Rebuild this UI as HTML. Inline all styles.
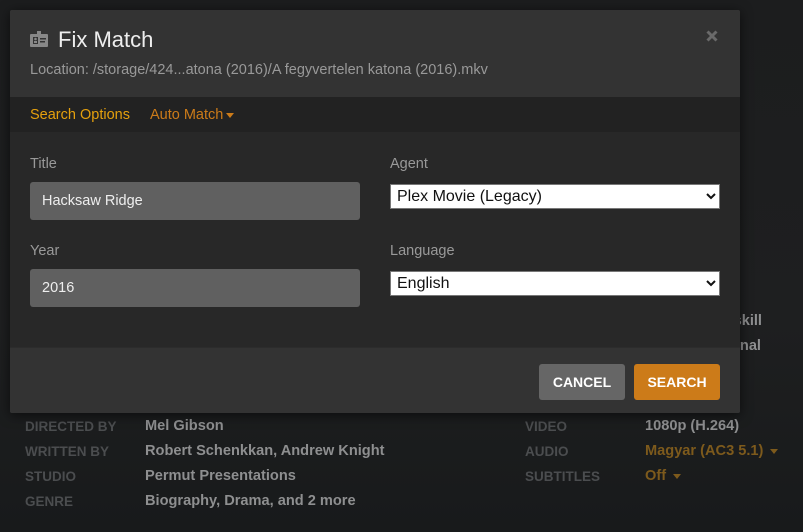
<!DOCTYPE html>
<html><head><meta charset="utf-8">
<style>
*{box-sizing:border-box;margin:0;padding:0}
html,body{width:803px;height:532px;overflow:hidden}
body{background:linear-gradient(180deg,#1c1d1e 0%,#1e1f20 60%,#181a1b 100%);font-family:"Liberation Sans",sans-serif;position:relative}
.bg{position:absolute;font-weight:bold;font-size:14.6px}
.lbl{color:#4b4d4f;font-size:13.5px}
.val{color:#8e8f90}
.or{color:#7d5a1c}
.car{display:inline-block;width:0;height:0;border-left:4px solid transparent;border-right:4px solid transparent;border-top:5px solid currentColor;vertical-align:middle;margin-left:3px}
.modal{position:absolute;left:10px;top:10px;width:730px;height:403px;background:#282828;box-shadow:0 2px 12px rgba(0,0,0,.6);border-radius:2px;overflow:hidden}
.hdr{height:87px;background:#333;position:relative}
.hdr h1{position:absolute;left:48px;top:17px;font-weight:normal;font-size:22px;color:#eee}
.hdr .loc{position:absolute;left:20px;top:52px;font-size:14.5px;color:#999}
.close{position:absolute;right:22px;top:20px;width:12px;height:12px}
.bar{height:35px;background:#222;position:relative;font-size:14.5px}
.bar span.t{position:absolute;top:10px}
.body{position:relative;height:215px}
.f{position:absolute;font-size:14.5px;color:#999}
.inp{position:absolute;width:330px;height:38px;background:#606060;border-radius:3px;color:#eee;font-size:14.5px;padding:11px 12px}
select{position:absolute;width:330px;height:25px;background:#fff;border:1px solid #777;font-size:16px;font-family:"Liberation Sans",sans-serif;color:#111;padding-left:2px}
.ftr{position:absolute;left:0;top:337px;width:730px;height:66px;background:#333;border-top:1px solid #2c2c2c}
.btn{position:absolute;top:16px;width:86px;height:36px;border-radius:3px;color:#fff;font-weight:bold;font-size:14px;text-align:center;line-height:36px}
</style></head><body>
<div class="bg val" style="right:41px;top:313px">skill</div>
<div class="bg val" style="right:42px;top:338px">sonal</div>
<div class="bg lbl" style="left:25px;top:419px">DIRECTED BY</div>
<div class="bg lbl" style="left:25px;top:444px">WRITTEN BY</div>
<div class="bg lbl" style="left:25px;top:469px">STUDIO</div>
<div class="bg lbl" style="left:25px;top:494px">GENRE</div>
<div class="bg val" style="left:145px;top:418px">Mel Gibson</div>
<div class="bg val" style="left:145px;top:443px">Robert Schenkkan, Andrew Knight</div>
<div class="bg val" style="left:145px;top:468px">Permut Presentations</div>
<div class="bg val" style="left:145px;top:493px">Biography, Drama, and 2 more</div>
<div class="bg lbl" style="left:525px;top:419px">VIDEO</div>
<div class="bg lbl" style="left:525px;top:444px">AUDIO</div>
<div class="bg lbl" style="left:525px;top:469px">SUBTITLES</div>
<div class="bg val" style="left:645px;top:418px">1080p (H.264)</div>
<div class="bg or" style="left:645px;top:443px">Magyar (AC3 5.1) <span class="car"></span></div>
<div class="bg or" style="left:645px;top:468px">Off <span class="car"></span></div>

<div class="modal">
 <div class="hdr">
  <svg style="position:absolute;left:20px;top:21px" width="18" height="16" viewBox="0 0 18 16"><rect x="7" y="0" width="4" height="4" fill="#888"/><rect x="0" y="3" width="18" height="13" rx="1" fill="#888"/><rect x="3" y="6" width="5" height="7" fill="#333"/><circle cx="5.5" cy="8" r="1.3" fill="#888"/><rect x="4" y="10" width="3" height="2" fill="#888"/><rect x="10" y="7" width="6" height="1.5" fill="#333"/><rect x="10" y="10" width="5" height="1.5" fill="#333"/></svg>
  <h1>Fix Match</h1>
  <div class="loc">Location: /storage/424...atona (2016)/A fegyvertelen katona (2016).mkv</div>
  <svg class="close" viewBox="0 0 12 12"><path d="M1.5 1.5L10.5 10.5M10.5 1.5L1.5 10.5" stroke="#6a6a6a" stroke-width="3"/></svg>
 </div>
 <div class="bar">
  <span class="t" style="left:20px;color:#e5a00d">Search Options</span>
  <span class="t" style="left:140px;color:#cc7b19">Auto Match<span class="car"></span></span>
 </div>
 <div class="body">
  <div class="f" style="left:20px;top:24px">Title</div>
  <div class="inp" style="left:20px;top:50px">Hacksaw Ridge</div>
  <div class="f" style="left:20px;top:111px">Year</div>
  <div class="inp" style="left:20px;top:137px">2016</div>
  <div class="f" style="left:380px;top:24px">Agent</div>
  <select style="left:380px;top:52px"><option>Plex Movie (Legacy)</option></select>
  <div class="f" style="left:380px;top:111px">Language</div>
  <select style="left:380px;top:139px"><option>English</option></select>
 </div>
 <div class="ftr">
  <div class="btn" style="left:529px;background:#666">CANCEL</div>
  <div class="btn" style="left:624px;background:#cc7b19">SEARCH</div>
 </div>
</div>
</body></html>
